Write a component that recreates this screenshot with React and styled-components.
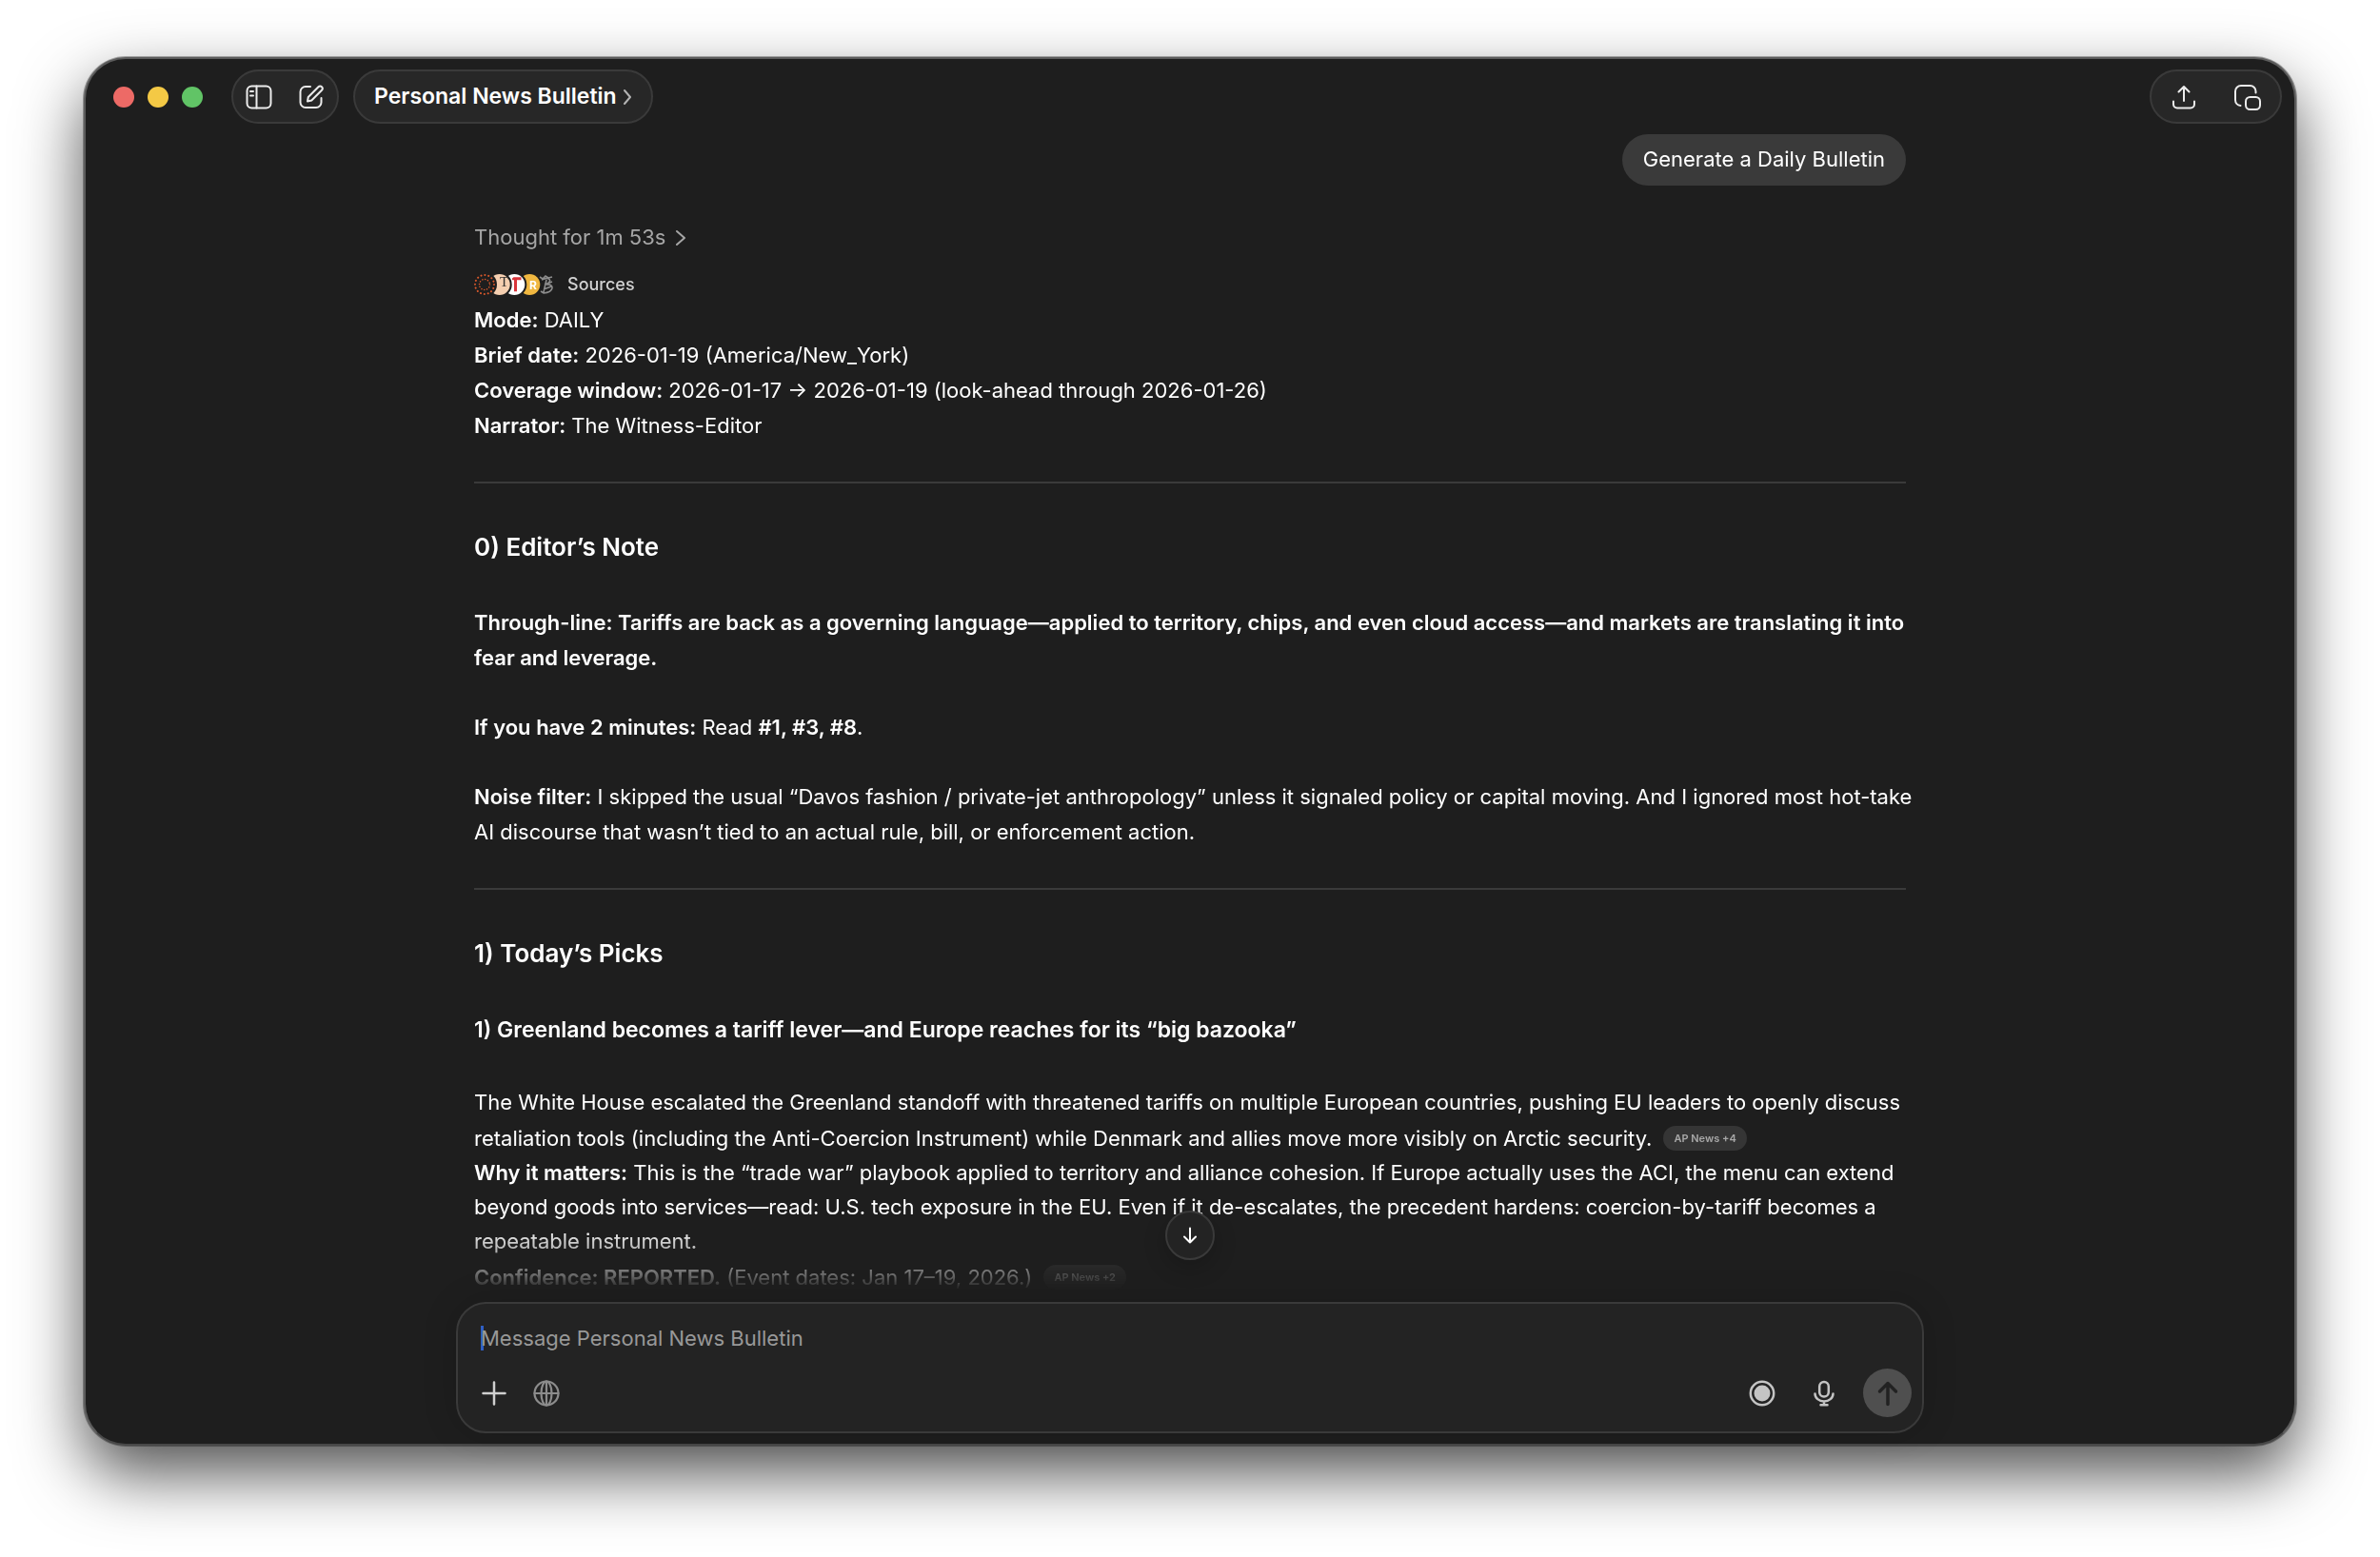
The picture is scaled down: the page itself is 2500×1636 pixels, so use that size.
import React from "react"
import styled, { createGlobalStyle } from "styled-components"

const GlobalStyle = createGlobalStyle`
  * {
    box-sizing: border-box;
  }

  body {
    margin: 0;
    background: #fff;
    color: #fff;
    font-family: Inter, "Liberation Sans", sans-serif;
    font-size: 22px;
    line-height: 37px;
  }

  button,
  input {
    font: inherit;
    color: inherit;
  }

  button {
    padding: 0;
    border: 0;
    background: none;
  }
`

const Desktop = styled.div`
  height: 100vh;
  padding: 60px 88px 117px;
  overflow: hidden;
`

const Window = styled.div`
  height: 100%;
  display: flex;
  flex-direction: column;
  background: #1e1e1e;
  border: 2px solid #5c5c5c;
  border-bottom-color: #484848;
  border-radius: 44px;
  box-shadow: 0 0 0 1px rgba(0, 0, 0, 0.3), 0 30px 68px rgba(0, 0, 0, 0.68);
`

const Toolbar = styled.header`
  display: flex;
  align-items: center;
  padding: 11px 13px 11px 29px;
`

const Lights = styled.div`
  display: flex;
  gap: 14px;
  margin-right: 30px;
`

const Light = styled.button`
  width: 22px;
  height: 22px;
  border-radius: 50%;
  background: ${props => props.$color};
`

const Pill = styled.div`
  height: 57px;
  display: flex;
  align-items: center;
  gap: ${props => props.$gap};
  padding: 0 ${props => props.$pad};
  background: #272727;
  border: 2px solid #3a3a3a;
  border-radius: 29px;
`

const TitleButton = styled(Pill).attrs({ as: "button" })`
  margin: 0 auto 0 15px;
  font-size: 23px;
  font-weight: 600;

  svg {
    color: #b4b4b4;
  }
`

const IconButton = styled.button`
  display: flex;
  color: ${props => props.$color || "#ececec"};
`

const Conversation = styled.main`
  flex: 1;
  min-height: 0;
  overflow: hidden;
  mask-image: linear-gradient(
    to top,
    transparent 12px,
    rgba(0, 0, 0, 0.34) 28px,
    #000 80px
  );
`

const Thread = styled.div`
  max-width: 1504px;
  margin: 0 auto;
`

const UserMessage = styled.p`
  width: fit-content;
  margin: 0 0 36px auto;
  padding: 8px 22px 9px;
  background: #3a3a3a;
  border-radius: 27px;
`

const Thought = styled.button`
  display: flex;
  align-items: center;
  gap: 10px;
  color: #a6a6a6;
`

const Sources = styled.button`
  display: flex;
  align-items: center;
  gap: 14px;
  margin: 18px 0 6px;
  color: #d2d2d2;
  font-size: 18px;
  font-weight: 500;
  line-height: 26px;
`

const Text = styled.p`
  margin: 0 0 36px;
`

const Line = styled.span`
  display: block;
  white-space: nowrap;
`

const Story = styled.p`
  margin: 0;
  line-height: 36px;
`

const Rule = styled.hr`
  margin: 40px 0 48px;
  border: 0;
  border-top: 2px solid #3a3a3a;
`

const SectionTitle = styled.h2`
  margin: 0 0 42px;
  font-size: 26px;
  font-weight: 600;
  line-height: 38px;
`

const StoryTitle = styled.h3`
  margin: 0 0 39px;
  font-size: 23px;
  font-weight: 600;
  line-height: 38px;
`

const Strong = styled.strong`
  font-weight: 600;
`

const Cite = styled.a`
  display: inline-block;
  margin: 7px 0 0 12px;
  padding: 0 11px;
  background: #353535;
  border-radius: 13px;
  color: #a8a8a8;
  font-size: 11px;
  font-weight: 600;
  line-height: 26px;
  text-decoration: none;
  vertical-align: 4px;
`

const Footer = styled.footer`
  position: relative;
  width: calc(100% - 64px);
  max-width: 1542px;
  margin: 0 auto 11px;
`

const ScrollDown = styled.button`
  position: absolute;
  bottom: 100%;
  left: 50%;
  width: 52px;
  height: 52px;
  margin: 0 0 44px -26px;
  display: grid;
  place-items: center;
  background: #232323;
  border: 2px solid #3a3a3a;
  border-radius: 50%;
  box-shadow: 0 8px 24px rgba(0, 0, 0, 0.2);
`

const Composer = styled.form`
  padding: 18px 11px 15px 24px;
  background: #232323;
  border: 2px solid #3a3a3a;
  border-radius: 32px;
  box-shadow: 0 0 36px rgba(0, 0, 0, 0.16);
`

const InputRow = styled.label`
  display: flex;
  align-items: center;
  height: 36px;
  margin-bottom: 14px;
`

const Caret = styled.span`
  width: 3px;
  height: 26px;
  margin-right: -3px;
  background: #2f5fc4;
`

const MessageInput = styled.input`
  flex: 1;
  padding: 0;
  border: 0;
  outline: 0;
  background: none;

  &::placeholder {
    color: #989898;
    opacity: 1;
  }
`

const Actions = styled.div`
  display: flex;
  align-items: center;
`

const LeftActions = styled.div`
  display: flex;
  gap: 27px;
  margin-right: auto;
`

const RightActions = styled.div`
  display: flex;
  align-items: center;
  gap: 37px;
`

const SendButton = styled.button`
  width: 51px;
  height: 51px;
  margin-left: -10px;
  display: grid;
  place-items: center;
  background: #4f4f4f;
  border-radius: 50%;
  color: #222;
`

function Icon({ width = 28, height = 28, stroke = 2, children }) {
  return (
    <svg
      width={width}
      height={height}
      viewBox={`0 0 ${width} ${height}`}
      fill="none"
      stroke="currentColor"
      strokeWidth={stroke}
      strokeLinecap="round"
      strokeLinejoin="round"
      aria-hidden="true"
    >
      {children}
    </svg>
  )
}

const SidebarIcon = () => (
  <Icon>
    <rect x="1.5" y="2.5" width="25" height="23" rx="5" />
    <path d="M11.5 2.5v23M5 8h3M5 12.500h3" />
  </Icon>
)

const ComposeIcon = () => (
  <Icon>
    <path d="M13 3H8a5.500 5.500 0 0 0-5.500 5.500v11A5.500 5.500 0 0 0 8 25h11a5.500 5.500 0 0 0 5.500-5.500V15" />
    <path d="M10 18.500l.8-4.500L21.500 3.300a2.400 2.400 0 0 1 3.500 3.400L14.300 17.500z" />
  </Icon>
)

const ShareIcon = () => (
  <Icon>
    <path d="M14 18V3M8.500 8.500L14 3l5.500 5.500M3 18.500v3A4 4 0 0 0 7 25.500h14a4 4 0 0 0 4-4v-3" />
  </Icon>
)

const PopOutIcon = () => (
  <Icon>
    <path d="M6.500 23A6 6 0 0 1 1 17V8a6 6 0 0 1 6-6h9.500a6 6 0 0 1 6 6v1.500" />
    <rect x="12" y="14" width="15" height="13" rx="4.500" />
  </Icon>
)

const ChevronIcon = ({ width, height, stroke }) => (
  <Icon width={width} height={height} stroke={stroke}>
    <path d={`M2 2l${width - 4} ${height / 2 - 2}L2 ${height - 2}`} />
  </Icon>
)

const DownIcon = () => (
  <Icon width={20} height={20}>
    <path d="M10 2.500v15M4 11.500l6 6 6-6" />
  </Icon>
)

const PlusIcon = () => (
  <Icon stroke={2.5}>
    <path d="M14 2.500v23M2.500 14h23" />
  </Icon>
)

const GlobeIcon = () => (
  <Icon stroke={2.2}>
    <circle cx="14" cy="14" r="12.500" />
    <ellipse cx="14" cy="14" rx="5.500" ry="12.500" />
    <path d="M14 1.500v25M1.500 14h25" />
  </Icon>
)

const RecordIcon = () => (
  <Icon stroke={2.5}>
    <circle cx="14" cy="14" r="12.200" />
    <circle cx="14" cy="14" r="8.500" fill="currentColor" stroke="none" />
  </Icon>
)

const MicIcon = () => (
  <Icon stroke={2.5}>
    <rect x="9.200" y="2" width="9.600" height="15.500" rx="4.800" />
    <path d="M4.500 14.500a9.500 8 0 0 0 19 0M14 22.500V26M10.500 26.200h7" />
  </Icon>
)

const SendIcon = () => (
  <Icon stroke={3.5}>
    <path d="M14 25.500V3.500M5.500 12L14 3.500l8.500 8.500" />
  </Icon>
)

// Overlapping publisher favicons, each one cut out of its right neighbour
function SourceLogos() {
  return (
    <svg width="84" height="24" viewBox="0 0 84 24" aria-hidden="true">
      <g fill="none" stroke="#8d8d8d" strokeWidth="1.600">
        <path d="M69 4l3 2 3-3 3 2 4-1M71 7c8-4 12 1 5 5 9-1 8 8-3 9l-3-2M76 7l-3 13M74 12l8-3M73 17l8-3" />
      </g>
      <circle cx="58.300" cy="12" r="11" fill="#f0b740" />
      <text x="58" y="17" fill="#fff" fontSize="12" fontWeight="700">
        R
      </text>
      <circle cx="42.300" cy="12" r="13" fill="#1e1e1e" />
      <circle cx="42.300" cy="12" r="11" fill="#fff" />
      <path d="M40 5.500l1.500-1.200h8v3h-4.500v12h-3v-12H40z" fill="#d8353b" />
      <circle cx="26.700" cy="12" r="13" fill="#1e1e1e" />
      <circle cx="26.700" cy="12" r="11" fill="#f5cfb0" />
      <text
        x="27"
        y="14"
        fill="#33302e"
        fontSize="15"
        fontFamily="Liberation Serif, serif"
      >
        T
      </text>
      <circle cx="11" cy="12" r="13" fill="#1e1e1e" />
      <g fill="none" stroke="#d9582b" strokeLinecap="round">
        <circle cx="11" cy="12" r="10" strokeWidth="2" strokeDasharray="0.100 3.830" />
        <circle cx="11" cy="12" r="5.500" strokeWidth="1.500" strokeDasharray="0.100 2.780" />
      </g>
    </svg>
  )
}

export default function App() {
  return (
    <Desktop>
      <GlobalStyle />
      <Window>
        <Toolbar>
          <Lights>
            <Light $color="#ed6a66" aria-label="Close" />
            <Light $color="#f4c945" aria-label="Minimize" />
            <Light $color="#61c466" aria-label="Zoom" />
          </Lights>
          <Pill $gap="27px" $pad="13px">
            <IconButton aria-label="Toggle sidebar">
              <SidebarIcon />
            </IconButton>
            <IconButton aria-label="New chat">
              <ComposeIcon />
            </IconButton>
          </Pill>
          <TitleButton $gap="6px" $pad="20px">
            Personal News Bulletin
            <ChevronIcon width={10} height={18} stroke={2} />
          </TitleButton>
          <Pill $gap="39px" $pad="20px">
            <IconButton aria-label="Share">
              <ShareIcon />
            </IconButton>
            <IconButton aria-label="Open companion window">
              <PopOutIcon />
            </IconButton>
          </Pill>
        </Toolbar>

        <Conversation>
          <Thread>
            <UserMessage>Generate a Daily Bulletin</UserMessage>
            <Thought>
              Thought for 1m 53s
              <ChevronIcon width={12} height={18} stroke={2} />
            </Thought>
            <Sources>
              <SourceLogos />
              Sources
            </Sources>
            <Text>
              <Strong>Mode:</Strong> DAILY
              <br />
              <Strong>Brief date:</Strong> 2026-01-19 (America/New_York)
              <br />
              <Strong>Coverage window:</Strong> 2026-01-17 → 2026-01-19
              (look-ahead through 2026-01-26)
              <br />
              <Strong>Narrator:</Strong> The Witness-Editor
            </Text>
            <Rule />

            <SectionTitle>0) Editor’s Note</SectionTitle>
            <Text>
              <Strong>
                Through-line: Tariffs are back as a governing language—applied
                to territory, chips, and even cloud access—and markets are
                translating it into fear and leverage.
              </Strong>
            </Text>
            <Text>
              <Strong>If you have 2 minutes:</Strong> Read{" "}
              <Strong>#1, #3, #8</Strong>.
            </Text>
            <Text>
              <Line>
                <Strong>Noise filter:</Strong> I skipped the usual “Davos
                fashion / private-jet anthropology” unless it signaled policy
                or capital moving. And I ignored most hot-take
              </Line>
              <Line>
                AI discourse that wasn’t tied to an actual rule, bill, or
                enforcement action.
              </Line>
            </Text>
            <Rule />

            <SectionTitle>1) Today’s Picks</SectionTitle>
            <StoryTitle>
              1) Greenland becomes a tariff lever—and Europe reaches for its
              “big bazooka”
            </StoryTitle>
            <Story>
              The White House escalated the Greenland standoff with threatened
              tariffs on multiple European countries, pushing EU leaders to
              openly discuss retaliation tools (including the Anti-Coercion
              Instrument) while Denmark and allies move more visibly on Arctic
              security.
              <Cite href="#ap-news">AP News +4</Cite>
            </Story>
            <Story>
              <Strong>Why it matters:</Strong> This is the “trade war” playbook
              applied to territory and alliance cohesion. If Europe actually
              uses the ACI, the menu can extend beyond goods into
              services—read: U.S. tech exposure in the EU. Even if it
              de-escalates, the precedent hardens: coercion-by-tariff becomes a
              repeatable instrument.
            </Story>
            <Story>
              <Strong>Confidence: REPORTED.</Strong> (Event dates: Jan 17–19,
              2026.)
              <Cite href="#ap-news-dates">AP News +2</Cite>
            </Story>
          </Thread>
        </Conversation>

        <Footer>
          <ScrollDown aria-label="Scroll to bottom">
            <DownIcon />
          </ScrollDown>
          <Composer>
            <InputRow>
              <Caret />
              <MessageInput
                aria-label="Message"
                placeholder="Message Personal News Bulletin"
              />
            </InputRow>
            <Actions>
              <LeftActions>
                <IconButton type="button" aria-label="Add" $color="#d0d0d0">
                  <PlusIcon />
                </IconButton>
                <IconButton type="button" aria-label="Search the web" $color="#8c8c8c">
                  <GlobeIcon />
                </IconButton>
              </LeftActions>
              <RightActions>
                <IconButton type="button" aria-label="Record" $color="#c4c4c4">
                  <RecordIcon />
                </IconButton>
                <IconButton type="button" aria-label="Dictate" $color="#c4c4c4">
                  <MicIcon />
                </IconButton>
                <SendButton type="button" aria-label="Send">
                  <SendIcon />
                </SendButton>
              </RightActions>
            </Actions>
          </Composer>
        </Footer>
      </Window>
    </Desktop>
  )
}
